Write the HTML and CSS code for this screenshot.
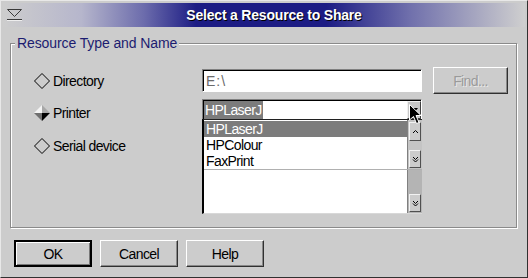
FILE: index.html
```html
<!DOCTYPE html>
<html lang="en">
<head>
  <meta charset="UTF-8">
  <title>Select a Resource to Share</title>
  <link rel="stylesheet" href="styles.css">
</head>
<body>
  <div class="window">
    <div class="titlebar">
      <svg class="sys-icon" width="20" height="24" viewBox="0 0 20 24">
        <polygon points="4.5,6.5 18.5,6.5 11.5,13.5" fill="none" stroke="#3a3a3a"/>
        <line x1="4" y1="16.5" x2="19" y2="16.5" stroke="#3a3a3a"/>
        <line x1="4" y1="17.5" x2="19" y2="17.5" stroke="#eeeeee"/>
      </svg>
      <div class="title">Select a Resource to Share</div>
    </div>

    <div class="client">
      <fieldset class="group">
        <legend>Resource Type and Name</legend>
        <div class="group-grid">
          <div class="radio">
            <svg width="16" height="16" viewBox="0 0 16 16">
              <polygon points="8,0.5 15.5,8 8,15.5 0.5,8" fill="none" stroke="#000"/>
            </svg>
            <span>Directory</span>
          </div>
          <div class="entry"><span class="entry-text">E:\</span></div>
          <div class="btn disabled">Find...</div>

          <div class="radio">
            <svg width="16" height="16" viewBox="0 0 16 16">
              <polygon points="8,0 0,8 8,8" fill="#f4f4f4"/>
              <polygon points="8,0 16,8 8,8" fill="#a8a8a8"/>
              <polygon points="0,8 8,16 8,8" fill="#707070"/>
              <polygon points="16,8 8,16 8,8" fill="#000"/>
            </svg>
            <span>Printer</span>
          </div>
          <div class="combo">
            <div class="combo-field"><span class="sel">HPLaserJ</span></div>
            <div class="combo-btn">
              <svg width="12" height="17" viewBox="0 0 12 17">
                <polygon points="2,6 10,6 6,11" fill="#000"/>
              </svg>
            </div>
            <div class="popup">
              <div class="popup-top">
                <div class="items">
                  <div class="item sel-item">HPLaserJ</div>
                  <div class="item">HPColour</div>
                  <div class="item">FaxPrint</div>
                </div>
                <div class="scroll">
                  <div class="sbtn up">
                    <svg width="7" height="5" viewBox="0 0 7 5"><polyline points="1,4 3.5,1.5 6,4" fill="none" stroke="#000"/></svg>
                  </div>
                  <div class="sbtn down">
                    <svg width="7" height="7" viewBox="0 0 7 7"><polyline points="1,1 3.5,3.5 6,1" fill="none" stroke="#000"/><polyline points="1,3.5 3.5,6 6,3.5" fill="none" stroke="#000"/></svg>
                  </div>
                </div>
              </div>
              <div class="popup-bottom">
                <div class="items"></div>
                <div class="scroll track">
                  <div class="sbtn down">
                    <svg width="7" height="7" viewBox="0 0 7 7"><polyline points="1,1 3.5,3.5 6,1" fill="none" stroke="#000"/><polyline points="1,3.5 3.5,6 6,3.5" fill="none" stroke="#000"/></svg>
                  </div>
                </div>
              </div>
            </div>
            <svg class="cursor" width="13" height="21" viewBox="0 0 13 21">
              <polygon points="0.5,0.5 0.5,16 4.5,12.5 7.5,19.5 10,18.5 7,11.5 12,11.5" fill="#000" stroke="#fff"/>
            </svg>
          </div>
          <div></div>

          <div class="radio">
            <svg width="16" height="16" viewBox="0 0 16 16">
              <polygon points="8,0.5 15.5,8 8,15.5 0.5,8" fill="none" stroke="#000"/>
            </svg>
            <span>Serial device</span>
          </div>
        </div>
      </fieldset>

      <div class="buttons">
        <div class="btn default">OK</div>
        <div class="btn">Cancel</div>
        <div class="btn">Help</div>
      </div>
    </div>
  </div>
</body>
</html>
```

FILE: styles.css
```css
* {
  box-sizing: border-box;
}

body {
  margin: 0;
  background-color: #cccccc;
  color: #000000;
  font-family: "Liberation Sans", Arial, sans-serif;
  font-size: 14px;
  letter-spacing: -0.6px;
}

.window {
  width: 528px;
  height: 278px;
  border: 1px solid;
  border-color: #e8e8e8 #303030 #303030 #e8e8e8;
  padding: 2px;
  display: flex;
  flex-direction: column;
}

.titlebar {
  height: 24px;
  display: flex;
  align-items: center;
  background: linear-gradient(to right, #cdcdcd 0%, #b6b6cc 15%, #6c6cac 27%, #1c1c84 37%, #1c1c84 62%, #7070ac 78%, #cfcfcf 100%);
}

.sys-icon {
  flex: none;
}

.title {
  flex: 1;
  text-align: center;
  color: #ffffff;
  font-weight: bold;
  font-size: 14px;
  letter-spacing: -0.2px;
  text-shadow: 1px 1px 0 #000000;
}

.client {
  flex: 1;
  padding: 9px 8px 0 7px;
}

/* group box */

.group {
  margin: 0;
  padding: 0;
  height: 192px;
  border: 1px solid #8a8a8a;
  box-shadow: inset 1px 1px 0 #ffffff, 1px 1px 0 #ffffff;
  min-width: 0;
}

.group legend {
  margin-left: 4px;
  padding: 0 2px;
  line-height: 15px;
  letter-spacing: -0.1px;
  color: #1c1c70;
  background-color: #cccccc;
}

.group-grid {
  display: grid;
  grid-template-columns: 157px 220px 75px;
  grid-template-rows: 27px 28px 28px;
  column-gap: 11px;
  row-gap: 5px;
  padding: 16px 0 0 23px;
}

.radio {
  display: flex;
  align-items: center;
  gap: 3px;
}

.radio svg {
  flex: none;
}

/* fields */

.entry,
.combo {
  border: 1px solid;
  border-color: #808080 #ffffff #ffffff #808080;
  box-shadow: inset 1px 1px 0 #000000;
  background-color: #ffffff;
}

.entry {
  height: 23px;
  align-self: center;
  padding: 1px 0 0 3px;
  display: flex;
  align-items: center;
}

.entry-text {
  color: #6a6a6a;
  letter-spacing: 1px;
}

.combo {
  position: relative;
  height: 21px;
  align-self: start;
  padding: 1px 0 0 1px;
  display: flex;
}

.combo-field {
  flex: 1;
  display: flex;
  align-items: stretch;
}

.sel {
  background-color: #7c7c7c;
  color: #ffffff;
  padding: 0 1px;
  line-height: 19px;
}

.combo-btn {
  width: 14px;
  background-color: #c8c8c8;
  border: 1px solid;
  border-color: #f0f0f0 #404040 #404040 #f0f0f0;
  display: flex;
  align-items: center;
  justify-content: center;
}

.popup {
  position: absolute;
  top: 19px;
  left: -1px;
  width: 220px;
  height: 95px;
  background-color: #ffffff;
  border-top: 1px solid #202020;
  border-left: 2px solid #000000;
  border-bottom: 1px solid #d8d8d8;
  display: flex;
  flex-direction: column;
}

.popup-top {
  height: 50px;
  display: flex;
  border-bottom: 1px solid #b0b0b0;
}

.popup-bottom {
  flex: 1;
  display: flex;
}

.items {
  flex: 1;
  padding-top: 1px;
}

.item {
  height: 16px;
  line-height: 16px;
  padding-left: 2px;
}

.sel-item {
  background-color: #7c7c7c;
  color: #ffffff;
}

.scroll {
  width: 15px;
  background-color: #c4c4c4;
  border-left: 1px solid #808080;
  display: flex;
  flex-direction: column;
  justify-content: space-between;
  padding: 2px 1px 1px 1px;
}

.scroll.track {
  background-color: #b4b4b4;
  justify-content: flex-end;
}

.sbtn {
  height: 18px;
  background-color: #cccccc;
  border: 1px solid;
  border-color: #f2f2f2 #505050 #505050 #f2f2f2;
  display: flex;
  align-items: center;
  justify-content: center;
}

.sbtn.up {
  height: 19px;
}

.cursor {
  position: absolute;
  top: 4px;
  left: 206px;
}

/* buttons */

.btn {
  display: flex;
  align-items: center;
  justify-content: center;
  height: 27px;
  background-color: #cccccc;
  border: 1px solid;
  border-color: #ffffff #303030 #303030 #ffffff;
  box-shadow: inset -1px -1px 0 #888888;
}

.btn.disabled {
  color: #9a9a9a;
  text-shadow: 1px 1px 0 #e8e8e8;
}

.btn.default {
  border: 2px solid #000000;
  box-shadow: inset 1px 1px 0 #ffffff, inset -1px -1px 0 #777777;
}

.buttons {
  display: flex;
  gap: 8px;
  margin-top: 12px;
  padding-left: 4px;
}

.buttons .btn {
  width: 78px;
}
```
